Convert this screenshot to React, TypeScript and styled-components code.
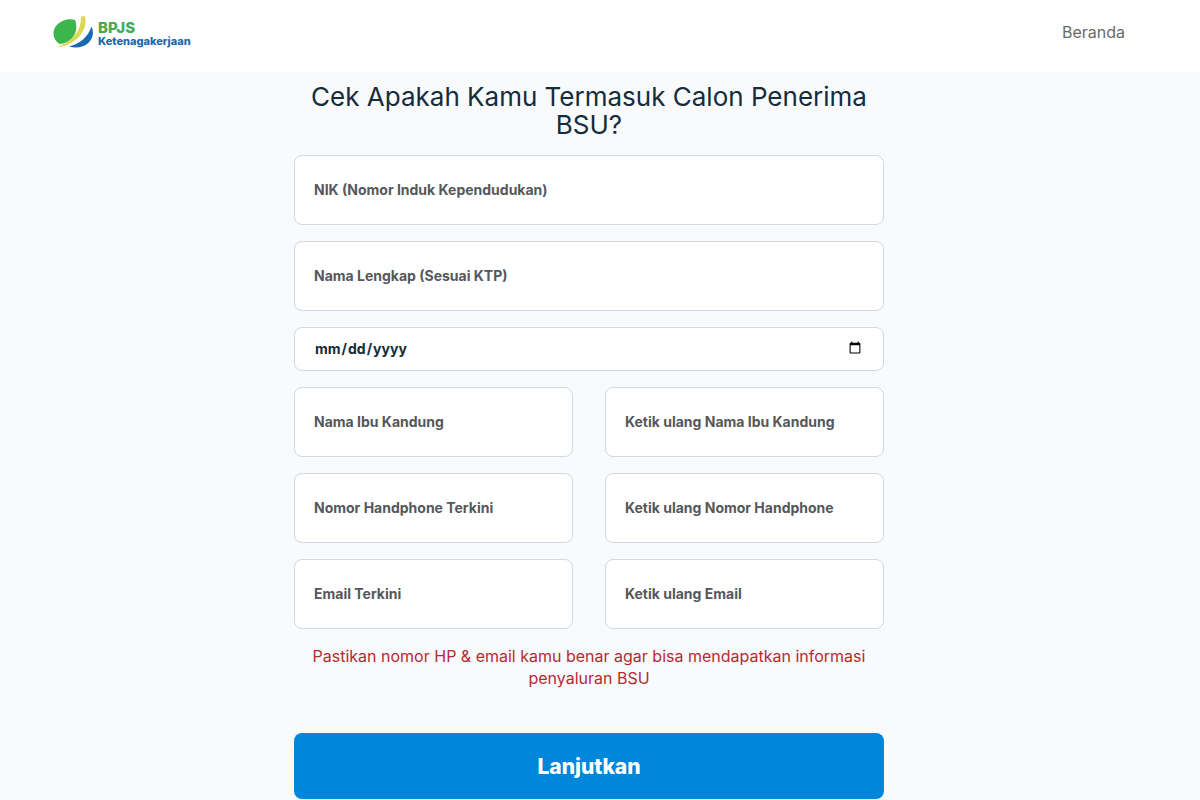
import React from "react";
import styled, { createGlobalStyle } from "styled-components";

const GlobalStyle = createGlobalStyle`
  *, *::before, *::after { box-sizing: border-box; }
  body {
    margin: 0;
    background: #f8fafc;
    color: #12263a;
    font-family: Inter, "Open Sans", sans-serif;
  }
`;

const Header = styled.header`
  display: flex;
  justify-content: space-between;
  align-items: center;
  padding: 15px 75px 23px 52px;
  background: #ffffff;
`;

const Brand = styled.a`
  display: flex;
  gap: 4px;
  text-decoration: none;
`;

const BrandText = styled.span`
  display: flex;
  flex-direction: column;
  padding-top: 5px;
  color: #1c69ae;
  font-size: 11px;
  font-weight: 800;
  line-height: 12px;
`;

const BrandName = styled.span`
  color: #45ab55;
  font-size: 15px;
  line-height: 15px;
`;

const NavLink = styled.a`
  color: #6a6a6a;
  font-size: 16px;
  line-height: 24px;
  text-decoration: none;
`;

const Main = styled.main`
  padding: 11px 22px 1px 0;
`;

const Form = styled.form`
  display: flex;
  flex-direction: column;
  gap: 16px;
  max-width: 590px;
  margin: 0 auto;
`;

const Title = styled.h1`
  margin: 0;
  color: #142c3b;
  font-size: 26px;
  font-weight: 400;
  line-height: 28px;
  text-align: center;
`;

const Row = styled.div`
  display: grid;
  grid-template-columns: 1fr 1fr;
  gap: 32px;
`;

const Field = styled.input<{ $compact?: boolean }>`
  width: 100%;
  min-width: 0;
  height: ${(p) => (p.$compact ? 44 : 70)}px;
  padding: 0 19px 2px;
  border: 1px solid #d2d8df;
  border-radius: 8px;
  background: #ffffff;
  color: #142c3b;
  font-family: inherit;
  font-size: 14px;
  font-weight: 700;

  &::placeholder {
    color: #55585b;
    opacity: 1;
  }

  &::-webkit-datetime-edit-fields-wrapper,
  &::-webkit-datetime-edit {
    padding: 0;
  }
`;

const Notice = styled.p`
  margin: 0;
  color: #b62a31;
  font-size: 16px;
  line-height: 22px;
  text-align: center;
`;

const Submit = styled.button`
  height: 66px;
  margin-top: 28px;
  border: 0;
  border-radius: 8px;
  background: #0087db;
  color: #ffffff;
  font-family: inherit;
  font-size: 21px;
  font-weight: 800;
  cursor: pointer;
`;

const Logo = () => (
  <svg width="42" height="34" viewBox="0 0 42 34" aria-hidden="true">
    <path d="M23 5C17 3 9 5 4 11C-1 18 2 26 8 29C12 29 18 26 21 22C25 17 25 10 23 5Z" fill="#3cb54a" />
    <path d="M29 1.500L33 1C36 14 27 29 5 32.500C22 25 29 16 29 1.500Z" fill="#d9d857" />
    <path d="M39.500 11.500C45 23 34 36 17 31.500C28 29 36 22 39.500 11.500Z" fill="#1769b0" />
  </svg>
);

type FieldInfo = { name: string; label: string; type?: string };

const mainFields: FieldInfo[] = [
  { name: "nik", label: "NIK (Nomor Induk Kependudukan)" },
  { name: "nama", label: "Nama Lengkap (Sesuai KTP)" },
];

const pairedFields: FieldInfo[][] = [
  [
    { name: "ibu", label: "Nama Ibu Kandung" },
    { name: "ibu2", label: "Ketik ulang Nama Ibu Kandung" },
  ],
  [
    { name: "hp", label: "Nomor Handphone Terkini", type: "tel" },
    { name: "hp2", label: "Ketik ulang Nomor Handphone", type: "tel" },
  ],
  [
    { name: "email", label: "Email Terkini", type: "email" },
    { name: "email2", label: "Ketik ulang Email", type: "email" },
  ],
];

const TextField = ({ name, label, type = "text" }: FieldInfo) => (
  <Field name={name} type={type} placeholder={label} aria-label={label} />
);

export default function App() {
  return (
    <>
      <GlobalStyle />
      <Header>
        <Brand href="#">
          <Logo />
          <BrandText>
            <BrandName>BPJS</BrandName>
            Ketenagakerjaan
          </BrandText>
        </Brand>
        <nav>
          <NavLink href="#">Beranda</NavLink>
        </nav>
      </Header>
      <Main>
        <Form onSubmit={(e) => e.preventDefault()}>
          <Title>Cek Apakah Kamu Termasuk Calon Penerima BSU?</Title>
          {mainFields.map((f) => (
            <TextField key={f.name} {...f} />
          ))}
          <Field $compact type="date" name="lahir" aria-label="Tanggal Lahir" />
          {pairedFields.map((pair) => (
            <Row key={pair[0].name}>
              {pair.map((f) => (
                <TextField key={f.name} {...f} />
              ))}
            </Row>
          ))}
          <Notice>
            Pastikan nomor HP &amp; email kamu benar agar bisa mendapatkan informasi penyaluran BSU
          </Notice>
          <Submit type="submit">Lanjutkan</Submit>
        </Form>
      </Main>
    </>
  );
}
